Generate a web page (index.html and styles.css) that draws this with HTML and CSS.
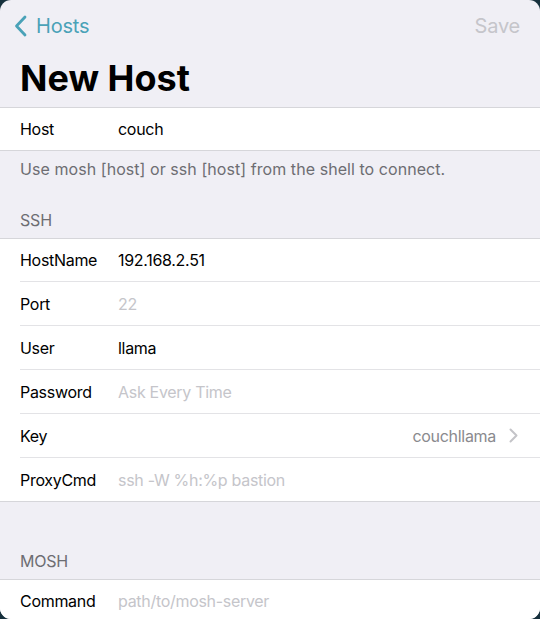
FILE: index.html
```html
<!DOCTYPE html>
<html>
<head>
<meta charset="utf-8">
<link rel="stylesheet" href="styles.css">
</head>
<body>
<div class="screen">
  <div class="nav">
    <div class="back">
      <svg class="chev" width="13" height="22" viewBox="0 0 13 22"><path d="M11 2 L2.5 11 L11 20" fill="none" stroke="#4aa2b8" stroke-width="2.8" stroke-linecap="round" stroke-linejoin="round"/></svg>
      <span>Hosts</span>
    </div>
    <div class="save">Save</div>
  </div>
  <h1 class="title">New Host</h1>

  <div class="group">
    <div class="row"><span class="label">Host</span><span class="value">couch</span></div>
  </div>
  <div class="footer">Use mosh [host] or ssh [host] from the shell to connect.</div>

  <div class="header">SSH</div>
  <div class="group">
    <div class="row"><span class="label">HostName</span><span class="value">192.168.2.51</span></div>
    <div class="row"><span class="label">Port</span><span class="value ph">22</span></div>
    <div class="row"><span class="label">User</span><span class="value">llama</span></div>
    <div class="row"><span class="label">Password</span><span class="value ph">Ask Every Time</span></div>
    <div class="row"><span class="label">Key</span><span class="detail">couchllama</span>
      <svg class="disc" width="9" height="15" viewBox="0 0 9 15"><path d="M1.5 1.5 L7.5 7.5 L1.5 13.5" fill="none" stroke="#c4c4c8" stroke-width="2" stroke-linecap="round" stroke-linejoin="round"/></svg>
    </div>
    <div class="row"><span class="label">ProxyCmd</span><span class="value ph">ssh -W %h:%p bastion</span></div>
  </div>

  <div class="header mosh">MOSH</div>
  <div class="group">
    <div class="row"><span class="label">Command</span><span class="value ph">path/to/mosh-server</span></div>
  </div>
</div>
</body>
</html>
```
FILE: styles.css
```css
html, body {
  margin: 0;
  padding: 0;
  background: #16303c;
}
.screen {
  width: 540px;
  height: 619px;
  overflow: hidden;
  border-radius: 11px;
  background: #f0eff5;
  font-family: Inter, "Liberation Sans", sans-serif;
  color: #000;
}
.nav {
  height: 52px;
  display: flex;
  align-items: center;
  justify-content: space-between;
  padding: 0 20px 0 14px;
}
.back {
  display: flex;
  align-items: center;
  gap: 9px;
  color: #4aa2b8;
  font-size: 20px;
  letter-spacing: -0.2px;
}
.chev { display: block; }
.save {
  color: #c5c5ca;
  font-size: 20px;
  letter-spacing: -0.2px;
}
.title {
  margin: 0;
  padding: 4px 20px 0;
  height: 51px;
  font-size: 36px;
  font-weight: 700;
  line-height: 44px;
}
.group {
  background: #fff;
  border-top: 1px solid #d6d6da;
  border-bottom: 1px solid #d6d6da;
}
.row {
  height: 43px;
  display: flex;
  align-items: center;
  margin-left: 20px;
  padding-right: 22px;
  font-size: 16px;
  letter-spacing: -0.3px;
  border-top: 1px solid #e3e3e6;
}
.row:first-child { border-top: none; height: 42px; }
.label { width: 98px; flex-shrink: 0; }
.value { flex: 1; }
.ph { color: #c5c5ca; }
.detail { flex: 1; text-align: right; color: #8a8a8e; margin-right: 13px; }
.disc { display: block; }
.footer {
  padding: 9px 20px 0;
  font-size: 16px;
  letter-spacing: 0.06px;
  line-height: 19px;
  color: #6d6d72;
}
.header {
  padding: 32px 20px 8px;
  font-size: 16px;
  letter-spacing: -0.2px;
  line-height: 19px;
  color: #6d6d72;
}
.mosh { padding-top: 50px; }
```
